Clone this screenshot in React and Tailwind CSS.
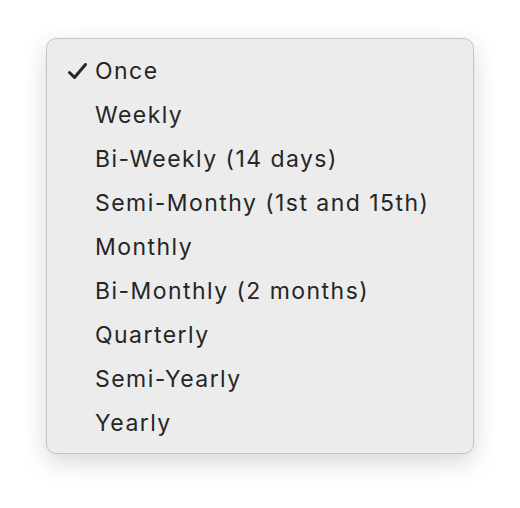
const items = [
  'Once',
  'Weekly',
  'Bi-Weekly (14 days)',
  'Semi-Monthy (1st and 15th)',
  'Monthly',
  'Bi-Monthly (2 months)',
  'Quarterly',
  'Semi-Yearly',
  'Yearly',
]

export default function App() {
  return (
    <div className="w-[520px] h-[508px] bg-white pt-[38px] pl-[46px] font-['Inter',sans-serif]">
      <div className="w-[428px] h-[416px] rounded-[10px] bg-[#ececec] border border-[#c4c4c4] shadow-[0_8px_24px_rgba(0,0,0,0.16)] py-[9px]">
        {items.map((item, i) => (
          <div key={item} className="flex items-center h-[44px] pt-[2px] text-[23px] tracking-[1.45px] text-[#262626]">
            <span className="w-[48px] flex justify-end pr-[7px]">
              {i === 0 && (
                <svg width="21" height="18" viewBox="0 0 21 18" fill="none">
                  <path d="M2.5 10.5 L7.5 15.5 L18.5 2.5" stroke="#262626" strokeWidth="3" strokeLinecap="round" strokeLinejoin="round" />
                </svg>
              )}
            </span>
            <span>{item}</span>
          </div>
        ))}
      </div>
    </div>
  )
}
